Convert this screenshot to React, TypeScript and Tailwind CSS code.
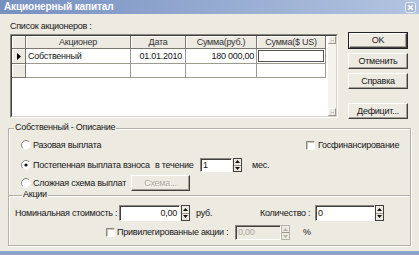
import React from "react";

const face = "font-['Liberation_Sans',Arial,sans-serif]";

function Btn({
  label,
  def,
  disabled,
  className = "",
}: {
  label: string;
  def?: boolean;
  disabled?: boolean;
  className?: string;
}) {
  const inner = (
    <div
      className={`flex h-full w-full items-center justify-center border border-t-white border-l-white border-r-[#404040] border-b-[#404040] bg-[#edeae2] shadow-[inset_-1px_-1px_0_#a3a095] ${
        disabled ? "text-[#aaa79d] [text-shadow:1px_1px_0_white]" : ""
      }`}
    >
      {label}
    </div>
  );
  if (def) {
    return <div className={`shrink-0 border border-[#202020] ${className}`}>{inner}</div>;
  }
  return <div className={`shrink-0 ${className}`}>{inner}</div>;
}

function Radio({ checked }: { checked?: boolean }) {
  return (
    <svg width="10" height="10" viewBox="0 0 10 10" className="shrink-0">
      <circle cx="5" cy="5" r="4.5" fill="white" />
      <path d="M1.8 8.2A4.5 4.5 0 0 1 8.2 1.8" stroke="#8a877d" strokeWidth="1" fill="none" />
      <path d="M8.2 1.8A4.5 4.5 0 0 1 1.8 8.2" stroke="#f4f3ee" strokeWidth="1" fill="none" />
      {checked && <circle cx="5" cy="5" r="1.6" fill="#111" />}
    </svg>
  );
}

function Check() {
  return (
    <div className="h-[9px] w-[9px] shrink-0 border border-t-[#8a877d] border-l-[#8a877d] border-b-white border-r-white bg-white shadow-[inset_1px_1px_0_#c9c6bb]" />
  );
}

function Spin({ disabled }: { disabled?: boolean }) {
  const c = disabled ? "#b6b3a9" : "#111";
  return (
    <div
      className={`flex h-full w-[9px] shrink-0 flex-col border bg-[#edeae2] ${
        disabled ? "border-[#b6b3a9]" : "border-[#404040]"
      }`}
    >
      <div className="flex flex-1 items-center justify-center border-b border-[#9a978c]">
        <svg width="5" height="3" viewBox="0 0 5 3">
          <path d="M2.5 0L5 3H0z" fill={c} />
        </svg>
      </div>
      <div className="flex flex-1 items-center justify-center">
        <svg width="5" height="3" viewBox="0 0 5 3">
          <path d="M0 0h5L2.5 3z" fill={c} />
        </svg>
      </div>
    </div>
  );
}

function Field({
  value,
  right,
  disabled,
  className = "",
}: {
  value: string;
  right?: boolean;
  disabled?: boolean;
  className?: string;
}) {
  return (
    <div
      className={`flex h-full shrink-0 items-center border border-t-[#8a877d] border-l-[#8a877d] border-b-white border-r-white px-[2px] shadow-[inset_1px_1px_0_#404040] ${
        right ? "justify-end" : "justify-start"
      } ${disabled ? "bg-[#edeae2] text-[#aaa79d]" : "bg-white"} ${className}`}
    >
      {value}
    </div>
  );
}

const cols = [
  { w: "w-[105px]", title: "Акционер" },
  { w: "w-[55px]", title: "Дата" },
  { w: "w-[71px]", title: "Сумма(руб.)" },
  { w: "w-[69px]", title: "Сумма($ US)" },
];

function Grid() {
  const head = "shrink-0 border-r border-b border-[#7a776e] bg-[#edeae2] shadow-[inset_1px_1px_0_white]";
  const cell = "shrink-0 border-r border-b border-[#9d9a90]";
  return (
    <div className="mt-[1px] flex h-[84px] w-[328px] border border-t-[#8a877d] border-l-[#8a877d] border-b-white border-r-white">
      <div className="flex flex-1 border border-t-[#404040] border-l-[#404040] border-b-[#d4d0c8] border-r-[#d4d0c8]">
        <div className="flex flex-1 flex-col bg-white">
          <div className="flex h-[13px]">
            <div className={`w-[14px] ${head}`} />
            {cols.map((c) => (
              <div key={c.title} className={`flex items-center justify-center text-[#333] ${c.w} ${head}`}>
                {c.title}
              </div>
            ))}
          </div>
          <div className="flex h-[15px]">
            <div className={`flex w-[14px] items-center justify-center ${head}`}>
              <svg width="4" height="7" viewBox="0 0 4 7">
                <path d="M0 0L4 3.5L0 7z" fill="#000" />
              </svg>
            </div>
            <div className={`flex items-center pl-[2px] ${cols[0].w} ${cell}`}>Собственный</div>
            <div className={`flex items-center justify-end pr-[3px] ${cols[1].w} ${cell}`}>01.01.2010</div>
            <div className={`flex items-center justify-end pr-[2px] ${cols[2].w} ${cell}`}>180 000,00</div>
            <div className={`${cols[3].w} ${cell} p-[1px]`}>
              <div className="h-full w-full border border-[#555]" />
            </div>
          </div>
          <div className="flex h-[14px]">
            <div className={`w-[14px] ${head}`} />
            {cols.map((c) => (
              <div key={c.title} className={`${c.w} ${cell}`} />
            ))}
          </div>
        </div>
        {/* scrollbar */}
        <div className="flex w-[8px] flex-col bg-[#f4f3ee]">
          <div className="flex h-[8px] items-center justify-center border border-t-white border-l-white border-r-[#9a978c] border-b-[#9a978c] bg-[#edeae2]">
            <div className="h-[1px] w-[3px] bg-[#c2bfb4]" />
          </div>
          <div className="flex-1" />
          <div className="flex h-[8px] items-center justify-center border border-t-white border-l-white border-r-[#9a978c] border-b-[#9a978c] bg-[#edeae2]">
            <div className="h-[1px] w-[3px] bg-[#c2bfb4]" />
          </div>
        </div>
      </div>
    </div>
  );
}

export default function App() {
  return (
    <div
      className={`flex h-[255px] w-[419px] flex-col overflow-hidden bg-[#edeae2] text-[9px] leading-none tracking-[-0.25px] text-[#161616] ${face}`}
    >
      {/* title bar */}
      <div className="flex h-[14px] shrink-0 items-center justify-between bg-linear-to-r from-[#7690c0] to-[#b3c4e0] pl-[4px] pr-[3px]">
        <span className="text-[10px] font-bold tracking-[-0.1px] text-white">Акционерный капитал</span>
        <svg width="11" height="11" viewBox="0 0 11 11">
          <rect x="0.5" y="0.5" width="10" height="10" rx="2" fill="#a9bad6" stroke="#e8eef7" />
          <path d="M3.2 3.2L7.8 7.8M7.8 3.2L3.2 7.8" stroke="white" strokeWidth="1.6" />
        </svg>
      </div>

      {/* list + buttons */}
      <div className="flex h-[114px] shrink-0">
        <div className="ml-[10px] flex flex-col">
          <div className="mt-[8px] h-[11px]">Список акционеров :</div>
          <Grid />
        </div>
        <div className="ml-[10px] flex w-[60px] flex-col pt-[18px]">
          <Btn label="OK" def className="h-[17px]" />
          <Btn label="Отменить" className="mt-[4px] h-[16px]" />
          <Btn label="Справка" className="mt-[4px] h-[16px]" />
          <Btn label="Дефицит..." className="mt-[14px] h-[16px]" />
        </div>
      </div>

      {/* group box */}
      <div className="relative ml-[8px] h-[118px] w-[403px] shrink-0 border border-[#b3b0a5] shadow-[inset_1px_1px_0_white,1px_1px_0_white]">
        <span className="absolute left-[5px] top-[-6px] bg-[#edeae2] px-[1px]">Собственный - Описание</span>

        <div className="flex flex-col pt-[9px]">
          <div className="flex h-[14px] items-center">
            <div className="flex w-[297px] shrink-0 items-center gap-[2px] pl-[12px]">
              <Radio />
              <span>Разовая выплата</span>
            </div>
            <div className="flex items-center gap-[3px]">
              <Check />
              <span>Госфинансирование</span>
            </div>
          </div>

          <div className="mt-[6px] flex h-[14px] items-center">
            <div className="flex w-[146px] shrink-0 items-center gap-[2px] pl-[12px]">
              <Radio checked />
              <span className="whitespace-nowrap">Постепенная выплата взноса</span>
            </div>
            <span className="w-[45px] shrink-0">в течение</span>
            <Field value="1" className="w-[32px]" />
            <div className="ml-[1px] h-full">
              <Spin />
            </div>
            <span className="ml-[10px]">мес.</span>
          </div>

          <div className="mt-[3px] flex h-[16px] items-center">
            <div className="flex w-[122px] shrink-0 items-center gap-[2px] pl-[12px]">
              <Radio />
              <span>Сложная схема выплат</span>
            </div>
            <Btn label="Схема..." disabled className="h-full w-[59px]" />
          </div>

          {/* Акции */}
          <div className="relative mt-[4px] border-t border-[#b3b0a5] shadow-[inset_0_1px_0_white]">
            <span className="absolute left-[13px] top-[-6px] bg-[#edeae2] px-[1px]">Акции</span>

            <div className="mt-[9px] flex h-[16px] items-center">
              <span className="w-[110px] shrink-0 pl-[6px]">Номинальная стоимость :</span>
              <Field value="0,00" right className="w-[61px]" />
              <div className="ml-[1px] h-full">
                <Spin />
              </div>
              <span className="ml-[6px] w-[64px] shrink-0">руб.</span>
              <span className="w-[55px] shrink-0">Количество :</span>
              <Field value="0" className="w-[60px]" />
              <div className="h-full">
                <Spin />
              </div>
            </div>

            <div className="mt-[4px] flex h-[15px] items-center">
              <div className="ml-[97px] flex w-[129px] shrink-0 items-center gap-[2px]">
                <Check />
                <span>Привилегированные акции :</span>
              </div>
              <Field value="0,00" disabled className="w-[46px]" />
              <div className="h-full">
                <Spin disabled />
              </div>
              <span className="ml-[13px]">%</span>
            </div>
          </div>
        </div>
      </div>

      <div className="mt-auto h-[4px] shrink-0 bg-[#8ea5cb]" />
    </div>
  );
}
